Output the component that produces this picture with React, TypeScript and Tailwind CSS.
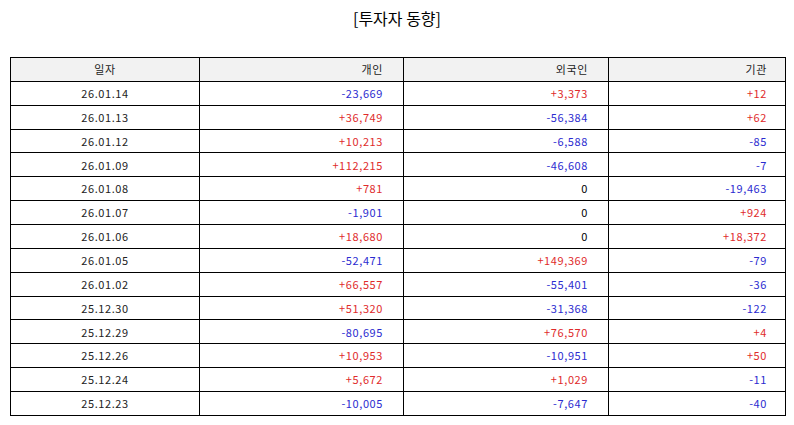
import React from "react";

type Row = { date: string; ind: string; frg: string; inst: string };

const rows: Row[] = [
  { date: "26.01.14", ind: "-23,669", frg: "+3,373", inst: "+12" },
  { date: "26.01.13", ind: "+36,749", frg: "-56,384", inst: "+62" },
  { date: "26.01.12", ind: "+10,213", frg: "-6,588", inst: "-85" },
  { date: "26.01.09", ind: "+112,215", frg: "-46,608", inst: "-7" },
  { date: "26.01.08", ind: "+781", frg: "0", inst: "-19,463" },
  { date: "26.01.07", ind: "-1,901", frg: "0", inst: "+924" },
  { date: "26.01.06", ind: "+18,680", frg: "0", inst: "+18,372" },
  { date: "26.01.05", ind: "-52,471", frg: "+149,369", inst: "-79" },
  { date: "26.01.02", ind: "+66,557", frg: "-55,401", inst: "-36" },
  { date: "25.12.30", ind: "+51,320", frg: "-31,368", inst: "-122" },
  { date: "25.12.29", ind: "-80,695", frg: "+76,570", inst: "+4" },
  { date: "25.12.26", ind: "+10,953", frg: "-10,951", inst: "+50" },
  { date: "25.12.24", ind: "+5,672", frg: "+1,029", inst: "-11" },
  { date: "25.12.23", ind: "-10,005", frg: "-7,647", inst: "-40" },
];

function tone(v: string) {
  if (v.startsWith("+")) return "text-[#e02b2b]";
  if (v.startsWith("-")) return "text-[#2b2bd0]";
  return "text-black";
}

export default function App() {
  return (
    <div className="w-[794px] h-[425px] bg-white px-[10px] pt-[6px] font-['Noto_Sans_CJK_KR',sans-serif] text-[#222]">
      <h1 className="text-center text-[16px] leading-[24px] text-black">[투자자 동향]</h1>
      <table className="mt-[27px] w-[775px] border-collapse text-[11px] tracking-[0.6px] table-fixed">
        <colgroup>
          <col className="w-[189px]" />
          <col className="w-[204px]" />
          <col className="w-[205px]" />
          <col className="w-[177px]" />
        </colgroup>
        <thead>
          <tr className="h-[23.87px] bg-[#f2f2f2]">
            <th className="border border-black font-normal text-center">일자</th>
            <th className="border border-black font-normal text-right pr-[20px]">개인</th>
            <th className="border border-black font-normal text-right pr-[20px]">외국인</th>
            <th className="border border-black font-normal text-right pr-[18px]">기관</th>
          </tr>
        </thead>
        <tbody>
          {rows.map((r) => (
            <tr key={r.date} className="h-[23.87px]">
              <td className="border border-black text-center">{r.date}</td>
              <td className={`border border-black text-right pr-[20px] ${tone(r.ind)}`}>{r.ind}</td>
              <td className={`border border-black text-right pr-[20px] ${tone(r.frg)}`}>{r.frg}</td>
              <td className={`border border-black text-right pr-[18px] ${tone(r.inst)}`}>{r.inst}</td>
            </tr>
          ))}
        </tbody>
      </table>
    </div>
  );
}
